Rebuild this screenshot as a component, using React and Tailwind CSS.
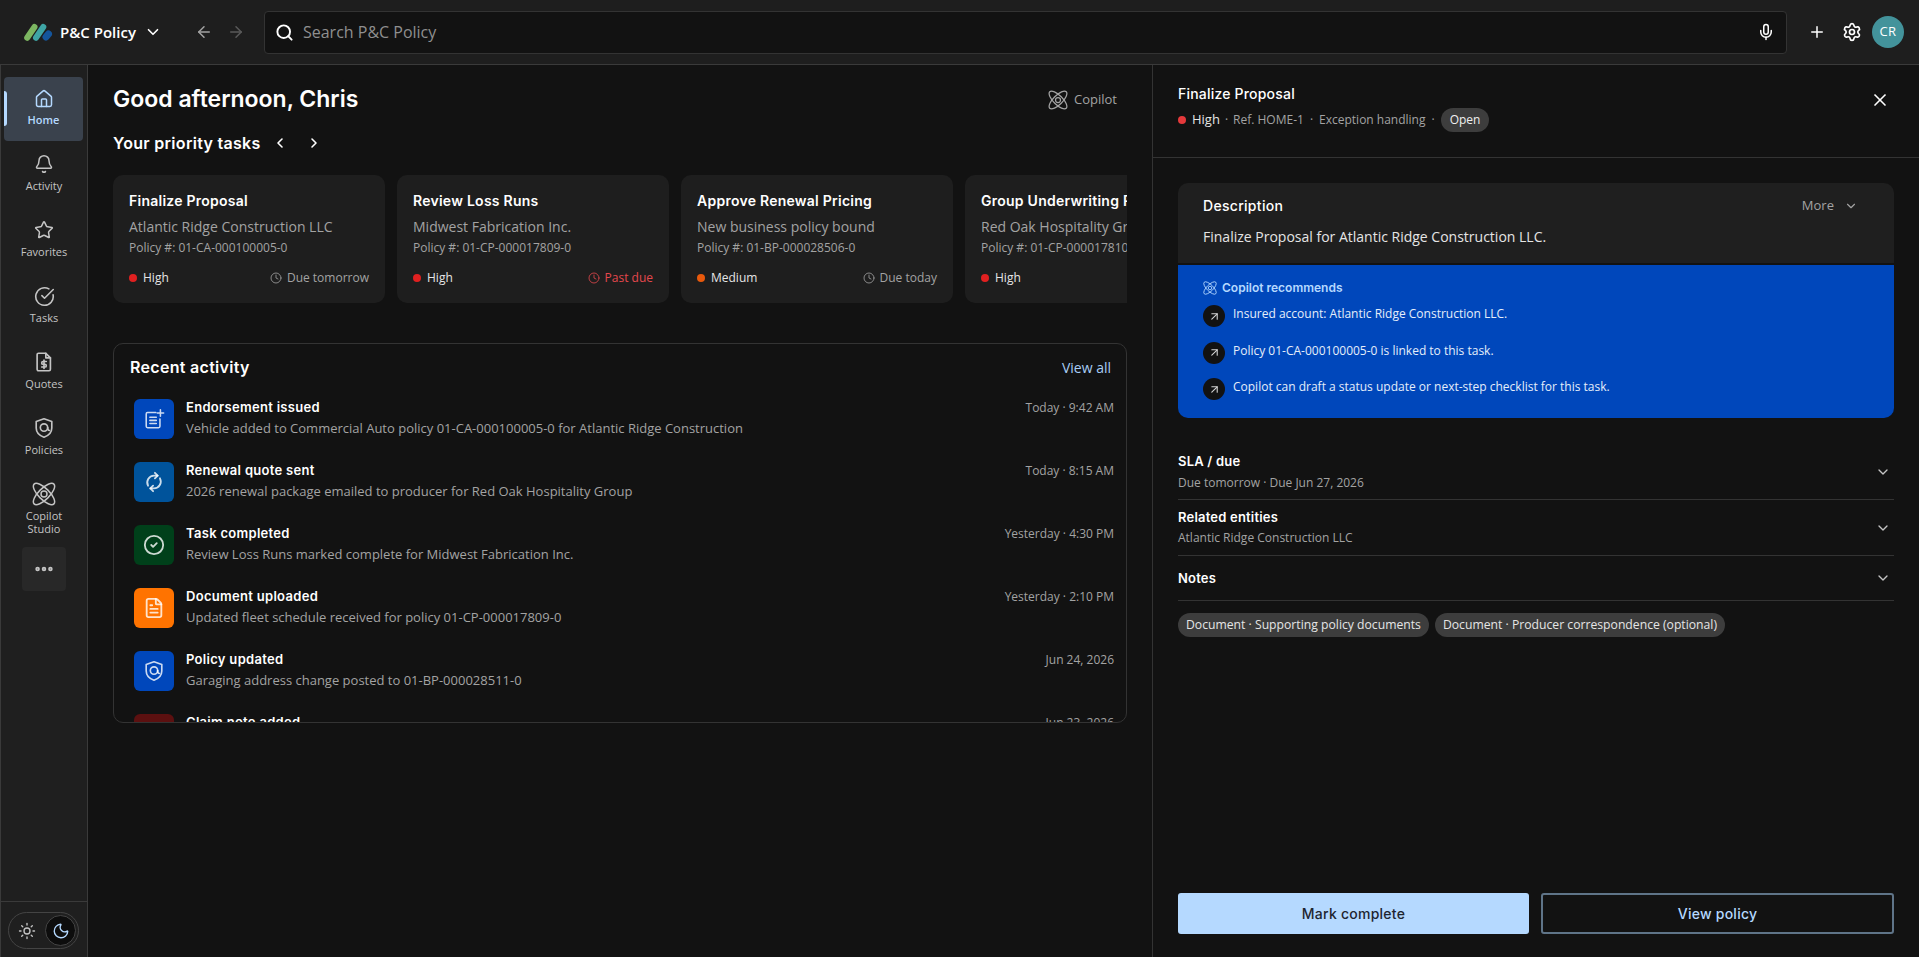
import React from "react";
import {
  Home, Bell, Star, CircleCheck, CircleCheckBig, Sun, Moon, Mic, Plus, Settings, Search, X, ArrowLeft, ArrowRight,
  ChevronDown, ChevronLeft, ChevronRight, Clock, ArrowUpRight, FileText, Ellipsis,
} from "lucide-react";

const CopilotIcon = ({ className }) => (
  <svg viewBox="0 0 24 24" fill="none" stroke="currentColor" strokeWidth="1.5" className={className}>
    <ellipse cx="12" cy="12" rx="14" ry="5.500" transform="rotate(45 12 12)" />
    <ellipse cx="12" cy="12" rx="14" ry="5.500" transform="rotate(-45 12 12)" />
    <circle cx="12" cy="12" r="3" />
  </svg>
);

const ShieldAt = ({ className }) => (
  <svg viewBox="0 0 24 24" fill="none" stroke="currentColor" strokeWidth="1.8" strokeLinejoin="round" strokeLinecap="round" className={className}>
    <path d="M12 2 20.500 5v7c0 4.800-3.700 8.300-8.500 10-4.800-1.700-8.500-5.200-8.500-10V5z" />
    <circle cx="12" cy="11.500" r="4" />
    <path d="M16 11.500c0 2.200.8 3.200 2 3.200" />
  </svg>
);

const QuoteDoc = ({ className }) => (
  <svg viewBox="0 0 24 24" fill="none" stroke="currentColor" strokeWidth="1.8" strokeLinejoin="round" strokeLinecap="round" className={className}>
    <path d="M6 2.500h8l5 5v12.500a1.500 1.500 0 0 1-1.500 1.500h-11.500a1.500 1.500 0 0 1-1.500-1.500v-16a1.500 1.500 0 0 1 1.500-1.500z" />
    <path d="M14 2.500v5h5" />
    <path d="M14.500 11.500h-3.500a1.500 1.500 0 0 0 0 3h2a1.500 1.500 0 0 1 0 3h-3.500M12 10v9" />
  </svg>
);

const DocPlus = ({ className }) => (
  <svg viewBox="0 0 24 24" fill="none" stroke="currentColor" strokeWidth="1.7" strokeLinecap="round" strokeLinejoin="round" className={className}>
    <path d="M14 5H5a1.500 1.500 0 0 0-1.500 1.500V20A1.500 1.500 0 0 0 5 21.500h12a1.500 1.500 0 0 0 1.500-1.500v-8" />
    <path d="M7.500 10h7M7.500 13.500h7M7.500 17h7M19 2v7M15.500 5.500h7" />
  </svg>
);

const SyncIcon = ({ className }) => (
  <svg viewBox="0 0 24 24" fill="none" stroke="currentColor" strokeWidth="2" strokeLinecap="round" strokeLinejoin="round" className={className}>
    <path d="M13 2l3 3-3 3" />
    <path d="M16 5h-4a7.500 7.500 0 0 0-6.500 11" />
    <path d="M11 22l-3-3 3-3" />
    <path d="M8 19h4a7.500 7.500 0 0 0 6.500-11" />
  </svg>
);

const Logo = () => (
  <svg width="29" height="18" viewBox="0 0 29 18">
    <path d="M3.200 14.800 10.500 4" stroke="#7cb661" strokeWidth="6" strokeLinecap="round" />
    <path d="M12 14.800 19.300 4" stroke="#3fa5a5" strokeWidth="6" strokeLinecap="round" />
    <path d="M22 14 24.500 11" stroke="#14559c" strokeWidth="7" strokeLinecap="round" />
  </svg>
);

const navItems = [
  { label: "Activity", Icon: Bell, size: "h-5 w-5" },
  { label: "Favorites", Icon: Star, size: "h-5 w-5" },
  { label: "Tasks", Icon: CircleCheckBig, size: "h-[21px] w-[21px]" },
  { label: "Quotes", Icon: QuoteDoc, size: "h-[22px] w-[22px]" },
  { label: "Policies", Icon: ShieldAt, size: "h-[22px] w-[22px]" },
];

const tasks = [
  { title: "Finalize Proposal", sub: "Atlantic Ridge Construction LLC", policy: "Policy #: 01-CA-000100005-0", pri: "High", dot: "bg-[#e02020]", due: "Due tomorrow" },
  { title: "Review Loss Runs", sub: "Midwest Fabrication Inc.", policy: "Policy #: 01-CP-000017809-0", pri: "High", dot: "bg-[#e02020]", due: "Past due", past: true },
  { title: "Approve Renewal Pricing", sub: "New business policy bound", policy: "Policy #: 01-BP-000028506-0", pri: "Medium", dot: "bg-[#e8590c]", due: "Due today" },
  { title: "Group Underwriting Review", sub: "Red Oak Hospitality Group", policy: "Policy #: 01-CP-000017810-0", pri: "High", dot: "bg-[#e02020]", due: "Due today" },
];

const activity = [
  { title: "Endorsement issued", desc: "Vehicle added to Commercial Auto policy 01-CA-000100005-0 for Atlantic Ridge Construction", time: "Today · 9:42 AM", bg: "bg-[#0047bb]", Icon: DocPlus },
  { title: "Renewal quote sent", desc: "2026 renewal package emailed to producer for Red Oak Hospitality Group", time: "Today · 8:15 AM", bg: "bg-[#00539b]", Icon: SyncIcon },
  { title: "Task completed", desc: "Review Loss Runs marked complete for Midwest Fabrication Inc.", time: "Yesterday · 4:30 PM", bg: "bg-[#00401a]", Icon: CircleCheck },
  { title: "Document uploaded", desc: "Updated fleet schedule received for policy 01-CP-000017809-0", time: "Yesterday · 2:10 PM", bg: "bg-[#ff7300]", Icon: FileText },
  { title: "Policy updated", desc: "Garaging address change posted to 01-BP-000028511-0", time: "Jun 24, 2026", bg: "bg-[#0047bb]", Icon: ShieldAt },
  { title: "Claim note added", desc: "Adjuster note added to claim file", time: "Jun 23, 2026", bg: "bg-[#5c1010]", Icon: FileText },
];

const recs = [
  "Insured account: Atlantic Ridge Construction LLC.",
  "Policy 01-CA-000100005-0 is linked to this task.",
  "Copilot can draft a status update or next-step checklist for this task.",
];

const heading = "font-['Inter',sans-serif]";

function TaskCard({ t }) {
  return (
    <div className="w-[272px] h-[128px] shrink-0 rounded-[10px] bg-[#1e1e1e] px-4 pt-[16px]">
      <div className={`${heading} text-[14px] leading-[20px] font-semibold tracking-[0.25px] text-white whitespace-nowrap`}>{t.title}</div>
      <div className="mt-[6px] text-[14px] leading-[20px] text-[#a3a3a3] whitespace-nowrap">{t.sub}</div>
      <div className="mt-[1px] text-[12px] leading-[20px] text-[#a3a3a3] whitespace-nowrap">{t.policy}</div>
      <div className="mt-[10px] flex items-center text-[12px] leading-[20px]">
        <span className={`h-2 w-2 rounded-full ${t.dot}`} />
        <span className="ml-[6px] text-[#e5e5e5]">{t.pri}</span>
        <span className={`ml-auto flex items-center gap-[5px] ${t.past ? "text-[#e5484d]" : "text-[#a3a3a3]"}`}>
          <Clock size={12} strokeWidth={1.6} />
          {t.due}
        </span>
      </div>
    </div>
  );
}

function ActivityRow({ a }) {
  return (
    <div className="flex h-[63px] shrink-0">
      <div className={`mt-[1px] h-10 w-10 shrink-0 rounded-[6px] ${a.bg} flex items-center justify-center text-white/80`}>
        <a.Icon className="h-[22px] w-[22px]" />
      </div>
      <div className="ml-3 -mt-px flex-1 min-w-0">
        <div className={`${heading} text-[13px] leading-[20px] font-semibold tracking-[0.3px] text-white`}>{a.title}</div>
        <div className="mt-[1px] text-[13px] leading-[20px] text-[#a3a3a3] whitespace-nowrap">{a.desc}</div>
      </div>
      <div className="text-[12px] leading-[20px] text-[#a3a3a3] whitespace-nowrap">{a.time}</div>
    </div>
  );
}

function Accordion({ title, sub, h, extra, subGap }) {
  return (
    <div className={`flex items-center justify-between border-b border-[#333] ${h} ${extra || ""}`}>
      <div>
        <div className={`${heading} text-[13px] leading-[20px] font-semibold tracking-[0.2px] text-white`}>{title}</div>
        {sub && <div className={`${subGap || "mt-[1px]"} text-[12px] leading-[20px] text-[#a3a3a3]`}>{sub}</div>}
      </div>
      <ChevronDown size={16} className="mr-[3px] text-[#c4c4c4]" />
    </div>
  );
}

export default function App() {
  return (
    <div className="h-screen w-screen overflow-hidden flex flex-col bg-[#121212] text-white font-['Open_Sans',sans-serif]">
      <header className="h-[65px] shrink-0 flex items-center bg-[#1e1e1e] border-b border-[#3a3a3a] pl-6 pr-[15px]">
        <Logo />
        <span className="ml-[7px] text-[15px] font-semibold text-white whitespace-nowrap">P&amp;C Policy</span>
        <ChevronDown size={18} strokeWidth={2.2} className="ml-[8px] text-white" />
        <ArrowLeft size={18} className="ml-[33px] text-[#a3a3a3]" />
        <ArrowRight size={18} className="ml-[14px] text-[#5a5a5a]" />
        <div className="ml-[19px] h-[43px] flex-1 flex items-center rounded-[4px] border border-[#333] bg-[#121212] pl-[10px] pr-[11px]">
          <Search size={19} strokeWidth={2.4} className="text-white" />
          <span className="ml-[9px] text-[16px] text-[#8f8f8f] flex-1">Search P&amp;C Policy</span>
          <Mic size={18} className="text-white" />
        </div>
        <Plus size={18} strokeWidth={2} className="ml-[21px] text-white" />
        <Settings size={20} className="ml-[16px] text-white" />
        <div className="ml-[10px] h-8 w-8 rounded-full bg-[#43939b] flex items-center justify-center text-[13px] font-medium tracking-wide text-white">CR</div>
      </header>

      <div className="flex-1 flex min-h-0">
        <aside className="w-[88px] shrink-0 flex flex-col bg-[#1f1f1f] border-r border-l border-[#3a3a3a]">
          <div className="flex-1 flex flex-col items-center pt-3">
            <div className="relative w-[79px] h-[64px] ml-[-1px] rounded-[4px] bg-[#3a424d] flex flex-col items-center pt-[12px] text-[#b5d9ff]">
              <span className="absolute left-0 top-[14px] h-[35px] w-[3px] rounded-r-sm bg-[#b5d9ff]" />
              <Home size={20} strokeWidth={1.8} />
              <span className="mt-[3px] text-[11px] leading-[16px] font-semibold">Home</span>
            </div>
            {navItems.map(({ label, Icon, size }) => (
              <div key={label} className="w-[79px] h-[66px] flex flex-col items-center pt-[13px] text-[#c4c4c4]">
                <div className="h-5 flex items-center justify-center">
                  <Icon className={size} strokeWidth={1.8} />
                </div>
                <span className="mt-[4px] text-[11px] leading-[16px]">{label}</span>
              </div>
            ))}
            <div className="w-[79px] flex flex-col items-center pt-[11px] text-[#c4c4c4]">
              <CopilotIcon className="h-[24px] w-[24px]" />
              <span className="mt-[3px] text-[11px] leading-[13px] text-center">Copilot<br />Studio</span>
            </div>
            <div className="mt-[12px] h-11 w-11 rounded-[4px] bg-[#282828] flex items-center justify-center text-[#c4c4c4]">
              <Ellipsis size={22} strokeWidth={3} />
            </div>
          </div>
          <div className="h-[56px] shrink-0 border-t border-[#3a3a3a] pl-[7px] pt-[10px]">
            <div className="h-[37px] w-[71px] rounded-full border border-[#444] flex items-center pl-[9px]">
              <Sun size={18} strokeWidth={1.8} className="text-[#c4c4c4]" />
              <span className="ml-[9px] h-[31px] w-[31px] rounded-full bg-[#0d0d0d] border border-[#444] flex items-center justify-center text-[#b5d9ff]">
                <Moon size={18} strokeWidth={1.8} />
              </span>
            </div>
          </div>
        </aside>

        <main className="flex-1 min-w-0 pl-6 pr-[25px] pt-[18px]">
          <div className="flex items-center justify-between h-[32px] pl-px">
            <h1 className={`${heading} text-[23px] font-semibold text-white`}>Good afternoon, Chris</h1>
            <div className="mt-[2px] flex items-center gap-[6px] pr-[10px] text-[13px] text-[#a3a3a3]">
              <CopilotIcon className="h-[20px] w-[20px]" />
              Copilot
            </div>
          </div>
          <div className="mt-[16px] h-[24px] flex items-center pl-px">
            <h2 className={`${heading} text-[16px] font-semibold tracking-[0.3px] text-white`}>Your priority tasks</h2>
            <ChevronLeft size={16} strokeWidth={2.4} className="ml-[11px] text-white" />
            <ChevronRight size={16} strokeWidth={2.4} className="ml-[18px] text-white" />
          </div>
          <div className="mt-[20px] flex gap-3 overflow-hidden pl-px">
            {tasks.map((t) => <TaskCard key={t.title} t={t} />)}
          </div>
          <section className="mt-[40px] ml-px h-[380px] rounded-[10px] border border-[#333] overflow-hidden pl-4 pr-[12px] pt-[11px] flex flex-col">
            <div className="h-[24px] flex items-center justify-between shrink-0">
              <h3 className={`${heading} text-[16px] font-semibold tracking-[0.3px] text-white`}>Recent activity</h3>
              <span className="mr-[3px] text-[14px] text-[#a8cdf5]">View all</span>
            </div>
            <div className="mt-[19px] pl-1 flex flex-col">
              {activity.map((a) => <ActivityRow key={a.title} a={a} />)}
            </div>
          </section>
        </main>

        <aside className="w-[767px] shrink-0 border-l border-[#333] flex flex-col">
          <div className="h-[93px] shrink-0 border-b border-[#333] px-[25px] pt-[17px] flex justify-between">
            <div>
              <div className={`${heading} text-[14px] leading-[24px] font-medium tracking-[0.2px] text-white`}>Finalize Proposal</div>
              <div className="mt-[2px] flex items-center text-[12px] text-[#a3a3a3] whitespace-nowrap">
                <span className="h-2 w-2 rounded-full bg-[#e5393b]" />
                <span className="ml-[6px] text-[13px] text-[#e5e5e5]">High</span>
                <span className="mx-[5px]">·</span>
                <span>Ref. HOME-1</span>
                <span className="mx-[6px]">·</span>
                <span>Exception handling</span>
                <span className="mx-[6px]">·</span>
                <span className="h-6 px-[9px] rounded-full bg-[#3d3d3d] flex items-center text-[#f0f0f0]">Open</span>
              </div>
            </div>
            <X size={20} strokeWidth={2} className="mt-[8px] mr-[4px] text-white" />
          </div>

          <div className="flex-1 flex flex-col px-[25px] pt-[25px] pb-[23px] min-h-0">
            <div className="rounded-[10px] overflow-hidden">
              <div className="h-[80px] bg-[#1f1f1f] px-[25px] pt-[12px] mb-[2px]">
                <div className="flex items-center justify-between h-[20px]">
                  <span className={`${heading} text-[14px] font-medium tracking-[0.3px] text-white`}>Description</span>
                  <span className="mt-[2px] flex items-center gap-[10px] pr-[8px] text-[13px] text-[#a3a3a3]">
                    More <ChevronDown size={14} className="mr-[3px]" />
                  </span>
                </div>
                <div className="mt-[12px] text-[14px] leading-[20px] text-[#e5e5e5]">Finalize Proposal for Atlantic Ridge Construction LLC.</div>
              </div>
              <div className="h-[153px] bg-[#0047bb] px-[25px] pt-[14px]">
                <div className="flex items-center gap-[5px] h-[18px] text-[#b5d9ff]">
                  <CopilotIcon className="h-[14px] w-[14px]" />
                  <span className={`${heading} text-[12px] font-semibold`}>Copilot recommends</span>
                </div>
                <div className="mt-[8px] flex flex-col gap-[14.500px]">
                  {recs.map((r) => (
                    <div key={r} className="flex items-start h-[22px]">
                      <span className="h-[22px] w-[22px] rounded-full bg-[#121212] flex items-center justify-center text-[#d4d4d4]">
                        <ArrowUpRight size={13} />
                      </span>
                      <span className="ml-2 mt-[1px] text-[12px] leading-[16px] text-[#e5eefa]">{r}</span>
                    </div>
                  ))}
                </div>
              </div>
            </div>

            <div className="mt-[15px]">
              <Accordion title="SLA / due" sub="Due tomorrow · Due Jun 27, 2026" h="h-[67px]" extra="pt-[11px]" subGap="mt-[2px]" />
              <Accordion title="Related entities" sub="Atlantic Ridge Construction LLC" h="h-[56px]" />
              <Accordion title="Notes" h="h-[45px]" />
            </div>
            <div className="mt-3 flex gap-[6px] text-[12.200px] text-[#e5e5e5]">
              <span className="h-6 px-2 rounded-full bg-[#3d3d3d] flex items-center">Document · Supporting policy documents</span>
              <span className="h-6 px-2 rounded-full bg-[#3d3d3d] flex items-center">Document · Producer correspondence (optional)</span>
            </div>

            <div className="mt-auto flex gap-3">
              <button className={`${heading} h-[41px] w-[351px] rounded-[3px] bg-[#b5d9ff] text-[14px] font-medium tracking-[0.25px] text-[#1e2530]`}>Mark complete</button>
              <button className={`${heading} h-[41px] flex-1 rounded-[3px] border-2 border-[#5f7488] text-[14px] font-medium tracking-[0.25px] text-[#b5d9ff]`}>View policy</button>
            </div>
          </div>
        </aside>
      </div>
    </div>
  );
}
